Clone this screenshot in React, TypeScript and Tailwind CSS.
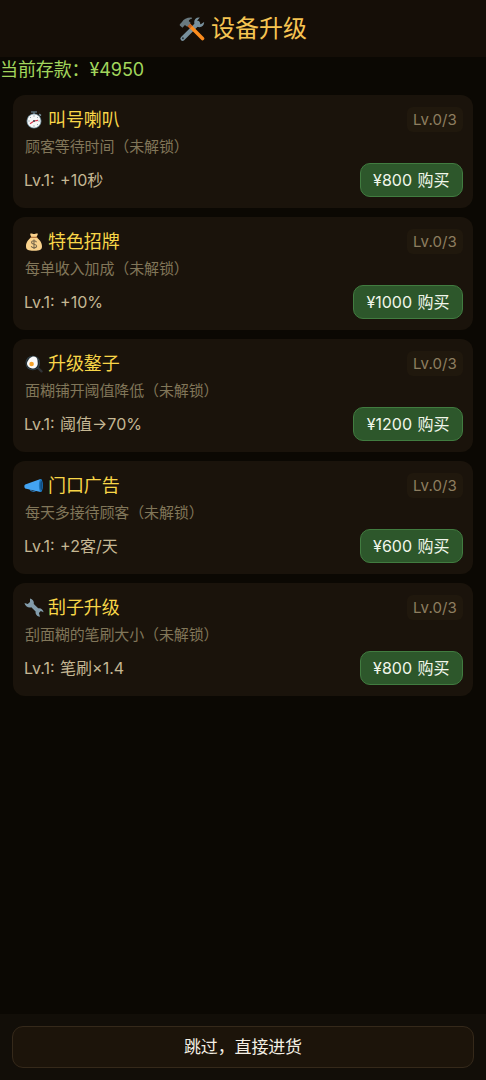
import type { ReactNode } from "react";

type Upgrade = {
  name: string;
  desc: string;
  effect: string;
  price: number;
  icon: ReactNode;
};

function ToolsIcon() {
  return (
    <svg viewBox="0 0 26 26" className="h-[26px] w-[26px]">
      <path
        d="M3.6 22.6 19 7.2"
        stroke="#78909c"
        strokeWidth="4.4"
        strokeLinecap="round"
      />
      <path
        d="M20.8 1.6c-3-.6-5.6 1.6-5.6 4.4 0 3.1 2.3 5.2 5.2 5.2 2.7 0 4.9-2.1 4.7-5.1l-3.3 2.2-3-1-.4-3z"
        fill="#78909c"
      />
      <circle cx="3.9" cy="22.3" r="1" fill="#2f3b40" />
      <path d="m9.5 8.6 14 14" stroke="#fb8c1e" strokeWidth="3.6" strokeLinecap="round" />
      <path d="m9.2 8.4 2.8 2.8" stroke="#c65f1d" strokeWidth="3.4" />
      <path
        d="M.8 8.2 3 6c1.8-3 5-4.6 9.6-4.4l.6.8c-2 .5-3 1.4-3.5 2.5l2 2-3.500 3.800-2.300-1.800-2.400 2.800L.8 9.500z"
        fill="#69797f"
      />
    </svg>
  );
}

function StopwatchIcon() {
  return (
    <svg viewBox="0 0 18 18" className="h-[18px] w-[18px]">
      <path d="M6 .2h6v1.600H6zM8.100 1.500h1.800v2H8.100z" fill="#566a74" />
      <path d="m14.700 2.600 1.700 1.500-1 1.200-1.700-1.500z" fill="#78909c" />
      <circle cx="9" cy="10" r="7.500" fill="#607d8b" />
      <circle cx="9" cy="10" r="6.700" fill="#f5f7f7" />
      <path
        d="M9 4.300v1.400M9 14.300v1.400M3.300 10h1.400M13.300 10h1.400M5 6l1 1M13 14l-1-1M13 6l-1 1"
        stroke="#78909c"
        strokeWidth=".8"
      />
      <path d="M5 12.800 9 10l4-.7" stroke="#d3344a" strokeWidth="1.200" fill="none" />
      <circle cx="9" cy="10" r="1" fill="#37474f" />
    </svg>
  );
}

function MoneyBagIcon() {
  return (
    <svg viewBox="0 0 18 18" className="h-[18px] w-[18px]">
      <path
        d="M5.500.6c1.500-.5 2 .4 3.500.4s2-.9 3.600-.4c.7.3-.2 1.900-1.300 3.700 3 1.800 5.700 5.500 5.700 8.900 0 3.500-2 4.600-8 4.600s-8-1.100-8-4.600c0-3.400 2.400-7.100 5.400-8.900C5.500 2.500 4.800 1.100 5.500.6z"
        fill="#f9d28c"
      />
      <path d="M6.200 4.400h5.600" stroke="#b7783e" strokeWidth="1.200" strokeLinecap="round" />
      <path
        d="M11.500 9.200c-.4-1.100-1.300-1.500-2.500-1.500-1.500 0-2.400.7-2.400 1.700 0 2.500 5 1.100 5 3.700 0 1.100-1 1.800-2.600 1.800-1.400 0-2.400-.6-2.700-1.700M9 6.500v9.600"
        stroke="#78684c"
        strokeWidth="1.100"
        fill="none"
      />
    </svg>
  );
}

function PanIcon() {
  return (
    <svg viewBox="0 0 18 18" className="h-[18px] w-[18px]">
      <path d="m12.500 12.500 4 3.800" stroke="#303336" strokeWidth="2.400" strokeLinecap="round" />
      <circle cx="7.800" cy="8" r="7.300" fill="#33444c" />
      <circle cx="7.800" cy="8" r="6.500" fill="#1f2a30" />
      <path
        d="M6.800 1.900c2.900-1 5.600.6 5.700 3.300 0 1.600.5 2.600.1 4.500-.6 2.800-3.100 4.300-5.400 3.700-2.200-.5-4.600-1.700-5.100-4-.5-2.300.9-3.400 1.400-4.500.5-1.300 1.700-2.500 3.300-3z"
        fill="#fafafa"
      />
      <circle cx="6.600" cy="9" r="2.300" fill="#f5a32c" />
    </svg>
  );
}

function MegaphoneIcon() {
  return (
    <svg viewBox="0 0 20 18" className="h-[18px] w-5">
      <path d="M5.800 11.500c.5 3 5 4 6.300 1.200" stroke="#2a6da6" strokeWidth="1.200" fill="none" />
      <path d="M1.200 7.500 16.500 2.100c2.500.5 2.500 12.300 0 12.800L1.200 11.400C0 10.600 0 8.100 1.200 7.500z" fill="#43a4f3" />
      <ellipse cx="16.900" cy="8.500" rx="2" ry="6.400" fill="#1b75bc" />
      <ellipse cx="17.300" cy="8.500" rx="1" ry="4.500" fill="#124e80" />
    </svg>
  );
}

function WrenchIcon() {
  return (
    <svg viewBox="0 0 20 20" className="h-5 w-5">
      <path
        d="M6 .6c2.700.5 4.300 2.800 3.800 5.300l4.400 4.400c2.600-.6 5 1.200 5.400 3.900l-2.800-1.100-1.900 1.900 1.100 3.800c-2.900-.1-4.800-2.400-4.400-5.200L7.300 9.200C4.300 10 .9 8.100.5 4.900l3.300 1.100 2.200-2z"
        fill="#829cab"
      />
    </svg>
  );
}

const upgrades: Upgrade[] = [
  { name: "叫号喇叭", desc: "顾客等待时间", effect: "+10秒", price: 800, icon: <StopwatchIcon /> },
  { name: "特色招牌", desc: "每单收入加成", effect: "+10%", price: 1000, icon: <MoneyBagIcon /> },
  { name: "升级鏊子", desc: "面糊铺开阈值降低", effect: "阈值→70%", price: 1200, icon: <PanIcon /> },
  { name: "门口广告", desc: "每天多接待顾客", effect: "+2客/天", price: 600, icon: <MegaphoneIcon /> },
  { name: "刮子升级", desc: "刮面糊的笔刷大小", effect: "笔刷×1.4", price: 800, icon: <WrenchIcon /> },
];

function UpgradeCard({ item }: { item: Upgrade }) {
  return (
    <li className="h-[113px] rounded-xl bg-[#1a130b] pt-3 pr-2.5 pl-[11px]">
      <div className="flex h-[25px] items-center justify-between">
        <h2 className="flex items-center text-lg leading-6 tracking-[-0.1px] text-[#f8d648]">
          <span className="mr-1 -ml-px flex w-[21px] shrink-0 justify-center">{item.icon}</span>
          {item.name}
        </h2>
        <span className="flex h-[25px] w-14 items-center justify-center rounded-md bg-[#20180d] pt-px text-[15px] tracking-[0.1px] text-[#8d7e60]">
          Lv.0/3
        </span>
      </div>
      <p className="mt-1 pl-px text-[15px] leading-[22px] tracking-[-0.12px] text-[#817659]">
        {item.desc}（未解锁）
      </p>
      <div className="mt-[5px] flex h-[34px] items-center justify-between">
        <span className="text-base text-[#c5b793] [word-spacing:1px]">Lv.1: {item.effect}</span>
        <button className="h-[34px] rounded-[10px] border border-[#417c40] bg-[#2d572b] px-[12.5px] text-base text-[#f1f6ea] [word-spacing:1px]">
          ¥{item.price} 购买
        </button>
      </div>
    </li>
  );
}

export default function App() {
  return (
    <main className="flex h-[1080px] flex-col bg-[#0b0803] font-[Inter,'Noto_Sans_CJK_SC',sans-serif]">
      <header className="flex h-[57px] items-center justify-center gap-1.5 bg-[#150e07]">
        <ToolsIcon />
        <h1 className="text-2xl text-[#f6c452]">设备升级</h1>
      </header>
      <p className="h-[26px] text-lg leading-[26px] tracking-[-0.1px] text-[#a2d65c]">当前存款：¥4950</p>
      <ul className="mt-3 flex flex-1 flex-col gap-[9px] px-[13px]">
        {upgrades.map((item) => (
          <UpgradeCard key={item.name} item={item} />
        ))}
      </ul>
      <footer className="h-[66px] bg-[#120e08] px-3 pt-3">
        <button className="h-[42px] w-full rounded-[11px] border border-[#35291a] bg-[#1c140a] pt-px text-[17px] tracking-[-0.15px] text-[#f4efe4]">
          跳过，直接进货
        </button>
      </footer>
    </main>
  );
}
